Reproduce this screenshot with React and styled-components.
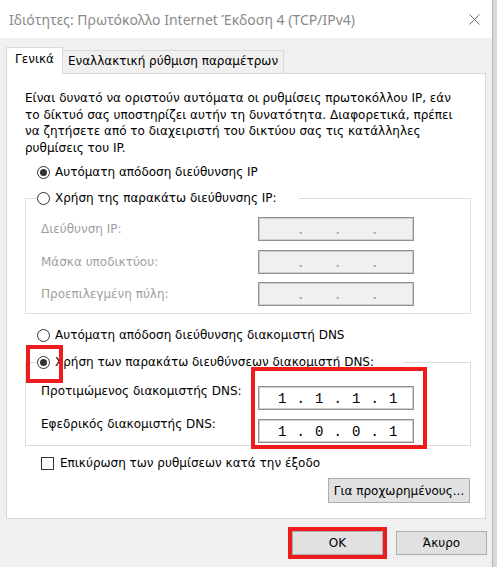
import React from 'react';
import styled, { createGlobalStyle } from 'styled-components';

const GlobalStyle = createGlobalStyle`
  html, body { margin: 0; padding: 0; background: #d9d9d9; }
  body { font-family: "DejaVu Sans", "Noto Sans", sans-serif; }
  #root { width: 497px; height: 567px; overflow: hidden; }
  * { box-sizing: border-box; }
`;

const RED = '#ee1c1c';

const Window = styled.div`
  width: 493px;
  height: 567px;
  background: #f0f0f0;
  border-right: 1px solid #b4b4b4;
  display: flex;
  flex-direction: column;
`;

const TitleBar = styled.div`
  height: 38px;
  flex: none;
  background: #fff;
  display: flex;
  align-items: center;
  justify-content: space-between;
  padding: 0 12px 0 9px;
`;

const Title = styled.div`
  font-family: "Noto Sans", "Open Sans", sans-serif;
  font-size: 14px;
  color: #8a8a8a;
  white-space: nowrap;
`;

const Body = styled.div`
  padding: 9px 0 0 6px;
  display: flex;
  flex-direction: column;
`;

const TabStrip = styled.div`
  display: flex;
  align-items: flex-end;
  height: 27px;
  margin-bottom: -1px;
  position: relative;
  z-index: 1;
`;

const Tab = styled.div`
  height: ${p => (p.$active ? 27 : 24)}px;
  padding: ${p => (p.$active ? '4px 8px 0 8px' : '3px 5px 0 5px')};
  background: ${p => (p.$active ? '#fff' : '#f0f0f0')};
  border: 1px solid #d9d9d9;
  border-bottom: ${p => (p.$active ? 'none' : '1px solid #d9d9d9')};
  ${p => (p.$active ? '' : 'margin-left: -1px;')}
  font-size: 12px;
  color: #000;
  white-space: nowrap;
`;

const Panel = styled.div`
  width: 480px;
  height: 446px;
  background: #fff;
  border: 1px solid #d9d9d9;
  padding: 16px 14px 0 18px;
  display: flex;
  flex-direction: column;
`;

const Intro = styled.p`
  margin: 0;
  font-size: 12px;
  line-height: 16.5px;
  color: #000;
  white-space: nowrap;
`;

const OptionRow = styled.label`
  display: flex;
  align-items: center;
  gap: 5px;
  height: 18px;
  margin: ${p => p.$mt || 0}px 0 0 12px;
  font-size: 12px;
  color: #000;
  white-space: nowrap;
`;

const RadioCircle = styled.span`
  position: relative;
  flex: none;
  width: 13px;
  height: 13px;
  border-radius: 50%;
  border: 1px solid #333;
  background: #fff;
  &::before {
    content: '';
    display: ${p => (p.$checked ? 'block' : 'none')};
    position: absolute;
    left: 2px;
    top: 2px;
    width: 7px;
    height: 7px;
    border-radius: 50%;
    background: #333;
  }
  &::after {
    content: '';
    display: ${p => (p.$highlight ? 'block' : 'none')};
    position: absolute;
    left: -12px;
    top: -12px;
    width: 29px;
    height: 30px;
    border: 4px solid ${RED};
  }
`;

const Group = styled.fieldset`
  margin: ${p => p.$mt}px 0 0 0;
  padding: ${p => p.$pt}px 0 ${p => p.$pb}px 0;
  border: 1px solid #dcdcdc;
  min-width: 0;
`;

const Legend = styled.legend`
  display: flex;
  align-items: center;
  gap: 5px;
  height: 18px;
  margin-left: 11px;
  padding: 0 ${p => p.$gap}px 0 0;
  font-size: 12px;
  color: #000;
  white-space: nowrap;
`;

const FieldGrid = styled.div`
  position: relative;
  display: grid;
  grid-template-columns: 217px 156px;
  row-gap: ${p => p.$gap}px;
  margin-left: 15px;
`;

const FieldLabel = styled.div`
  font-size: 12px;
  color: ${p => (p.$disabled ? '#a0a0a0' : '#000')};
  white-space: nowrap;
  align-self: ${p => (p.$top ? 'start' : 'center')};
  margin-top: ${p => (p.$top ? -2 : 0)}px;
`;

const IPBox = styled.div`
  height: 24px;
  border: 1px solid #8f8f8f;
  box-shadow: inset 0 0 0 1px #cfcfcf;
  background: ${p => (p.$disabled ? '#f0f0f0' : '#fff')};
  display: grid;
  grid-template-columns: repeat(7, 18.5px);
  justify-items: center;
  align-items: center;
  padding-left: 14px;
  font-family: "Liberation Mono", "DejaVu Sans Mono", monospace;
  font-size: 14px;
  color: ${p => (p.$disabled ? '#a0a0a0' : '#000')};
`;

const Cell = styled.span`
  line-height: 1;
  padding-top: ${p => (p.$dot ? 2 : 1)}px;
`;

const Highlight = styled.div`
  position: absolute;
  left: 210px;
  top: -19px;
  width: 176px;
  height: 82px;
  border: 4px solid ${RED};
  pointer-events: none;
`;

const CheckRow = styled.label`
  display: flex;
  align-items: center;
  gap: 6px;
  height: 18px;
  margin: 8px 0 0 16px;
  font-size: 12px;
  color: #000;
  white-space: nowrap;
`;

const CheckBox = styled.span`
  flex: none;
  width: 13px;
  height: 13px;
  border: 1px solid #333;
  background: #fff;
`;

const Button = styled.button`
  position: relative;
  height: ${p => p.$h || 24}px;
  width: ${p => p.$w}px;
  padding: 0;
  background: #e1e1e1;
  border: 1px solid #adadad;
  font-family: "DejaVu Sans", sans-serif;
  font-size: 12px;
  color: #000;
  white-space: nowrap;
  &::after {
    content: '';
    display: ${p => (p.$highlight ? 'block' : 'none')};
    position: absolute;
    inset: -5px;
    border: 4px solid ${RED};
  }
`;

const AdvancedRow = styled.div`
  display: flex;
  justify-content: flex-end;
  margin: 6px 1px 0 0;
`;

const ButtonRow = styled.div`
  display: flex;
  justify-content: flex-end;
  gap: 13px;
  margin-top: 12px;
  padding-right: 5px;
`;

function Radio({ checked, highlight }) {
  return <RadioCircle $checked={checked} $highlight={highlight} />;
}

function IPField({ value, disabled }) {
  const parts = value ? value.split('.') : ['', '', '', ''];
  const cells = [];
  parts.forEach((p, i) => {
    cells.push(<Cell key={'o' + i}>{p}</Cell>);
    if (i < 3) cells.push(<Cell key={'d' + i} $dot>.</Cell>);
  });
  return <IPBox $disabled={disabled}>{cells}</IPBox>;
}

function CloseIcon() {
  return (
    <svg width="11" height="11" viewBox="0 0 11 11">
      <path d="M0.5 0.5 L10.5 10.5 M10.5 0.5 L0.5 10.5" stroke="#6e6e6e" strokeWidth="1" fill="none" />
    </svg>
  );
}

export default function App() {
  return (
    <>
      <GlobalStyle />
      <Window>
        <TitleBar>
          <Title>Ιδιότητες: Πρωτόκολλο Internet Έκδοση 4 (TCP/IPv4)</Title>
          <CloseIcon />
        </TitleBar>
        <Body>
          <TabStrip>
            <Tab $active>Γενικά</Tab>
            <Tab>Εναλλακτική ρύθμιση παραμέτρων</Tab>
          </TabStrip>
          <Panel>
            <Intro>
              Είναι δυνατό να οριστούν αυτόματα οι ρυθμίσεις πρωτοκόλλου IP, εάν
              <br />
              το δίκτυό σας υποστηρίζει αυτήν τη δυνατότητα. Διαφορετικά, πρέπει
              <br />
              να ζητήσετε από το διαχειριστή του δικτύου σας τις κατάλληλες
              <br />
              ρυθμίσεις του IP.
            </Intro>
            <OptionRow $mt={7}>
              <Radio checked />
              Αυτόματη απόδοση διεύθυνσης IP
            </OptionRow>
            <Group $mt={8} $pt={10} $pb={7}>
              <Legend $gap={22}>
                <Radio />
                Χρήση της παρακάτω διεύθυνσης IP:
              </Legend>
              <FieldGrid $gap={8.5}>
                <FieldLabel $disabled>Διεύθυνση IP:</FieldLabel>
                <IPField disabled />
                <FieldLabel $disabled>Μάσκα υποδικτύου:</FieldLabel>
                <IPField disabled />
                <FieldLabel $disabled>Προεπιλεγμένη πύλη:</FieldLabel>
                <IPField disabled />
              </FieldGrid>
            </Group>
            <OptionRow $mt={12}>
              <Radio />
              Αυτόματη απόδοση διεύθυνσης διακομιστή DNS
            </OptionRow>
            <Group $mt={9} $pt={15} $pb={2}>
              <Legend $gap={30}>
                <Radio checked highlight />
                Χρήση των παρακάτω διευθύνσεων διακομιστή DNS:
              </Legend>
              <FieldGrid $gap={9}>
                <FieldLabel $top>Προτιμώμενος διακομιστής DNS:</FieldLabel>
                <IPField value="1.1.1.1" />
                <FieldLabel $top>Εφεδρικός διακομιστής DNS:</FieldLabel>
                <IPField value="1.0.0.1" />
                <Highlight />
              </FieldGrid>
            </Group>
            <CheckRow>
              <CheckBox />
              Επικύρωση των ρυθμίσεων κατά την έξοδο
            </CheckRow>
            <AdvancedRow>
              <Button $w={142} $h={25}>Για προχωρημένους...</Button>
            </AdvancedRow>
          </Panel>
          <ButtonRow>
            <Button $w={91} $highlight>OK</Button>
            <Button $w={91}>Άκυρο</Button>
          </ButtonRow>
        </Body>
      </Window>
    </>
  );
}
